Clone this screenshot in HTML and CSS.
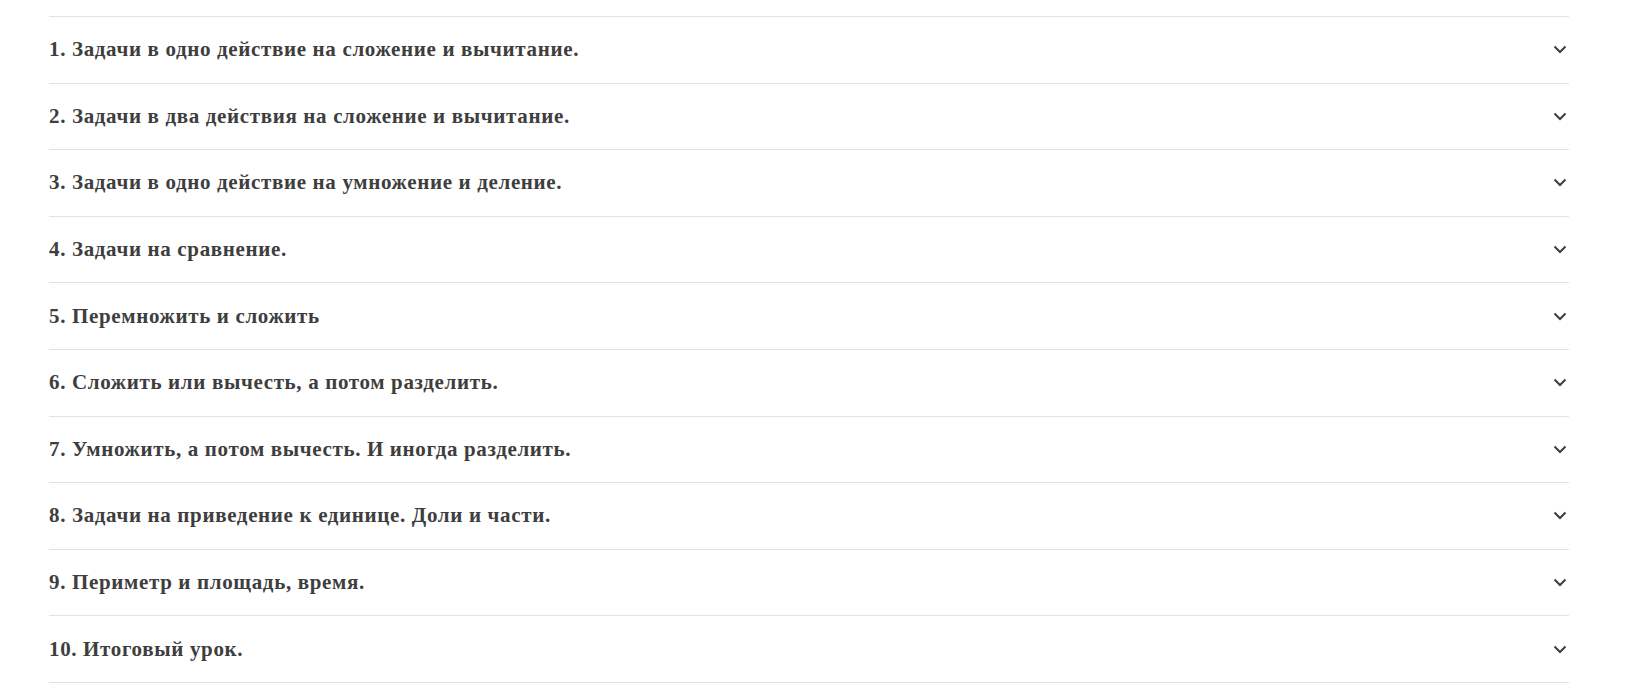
FILE: index.html
```html
<!DOCTYPE html>
<html lang="ru">
<head>
    <meta charset="utf-8">
    <title>Задачи</title>
    <link rel="stylesheet" href="styles.css">
</head>
<body>
    <div class="accordion">
        <div class="acc-item"><div class="acc-head"><span class="acc-title">1. Задачи в одно действие на сложение и вычитание.</span><svg class="chev" width="14" height="9" viewBox="0 0 14 9"><polyline points="1.5,1.5 7,7 12.5,1.5"/></svg></div></div>
        <div class="acc-item"><div class="acc-head"><span class="acc-title">2. Задачи в два действия на сложение и вычитание.</span><svg class="chev" width="14" height="9" viewBox="0 0 14 9"><polyline points="1.5,1.5 7,7 12.5,1.5"/></svg></div></div>
        <div class="acc-item"><div class="acc-head"><span class="acc-title">3. Задачи в одно действие на умножение и деление.</span><svg class="chev" width="14" height="9" viewBox="0 0 14 9"><polyline points="1.5,1.5 7,7 12.5,1.5"/></svg></div></div>
        <div class="acc-item"><div class="acc-head"><span class="acc-title">4. Задачи на сравнение.</span><svg class="chev" width="14" height="9" viewBox="0 0 14 9"><polyline points="1.5,1.5 7,7 12.5,1.5"/></svg></div></div>
        <div class="acc-item"><div class="acc-head"><span class="acc-title">5. Перемножить и сложить</span><svg class="chev" width="14" height="9" viewBox="0 0 14 9"><polyline points="1.5,1.5 7,7 12.5,1.5"/></svg></div></div>
        <div class="acc-item"><div class="acc-head"><span class="acc-title">6. Сложить или вычесть, а потом разделить.</span><svg class="chev" width="14" height="9" viewBox="0 0 14 9"><polyline points="1.5,1.5 7,7 12.5,1.5"/></svg></div></div>
        <div class="acc-item"><div class="acc-head"><span class="acc-title">7. Умножить, а потом вычесть. И иногда разделить.</span><svg class="chev" width="14" height="9" viewBox="0 0 14 9"><polyline points="1.5,1.5 7,7 12.5,1.5"/></svg></div></div>
        <div class="acc-item"><div class="acc-head"><span class="acc-title">8. Задачи на приведение к единице. Доли и части.</span><svg class="chev" width="14" height="9" viewBox="0 0 14 9"><polyline points="1.5,1.5 7,7 12.5,1.5"/></svg></div></div>
        <div class="acc-item"><div class="acc-head"><span class="acc-title">9. Периметр и площадь, время.</span><svg class="chev" width="14" height="9" viewBox="0 0 14 9"><polyline points="1.5,1.5 7,7 12.5,1.5"/></svg></div></div>
        <div class="acc-item"><div class="acc-head"><span class="acc-title">10. Итоговый урок.</span><svg class="chev" width="14" height="9" viewBox="0 0 14 9"><polyline points="1.5,1.5 7,7 12.5,1.5"/></svg></div></div>
    </div>
</body>
</html>
```

FILE: styles.css
```css
body {
    margin: 0;
    background: #fff;
    font-family: 'Liberation Serif', 'Times New Roman', serif;
    color: #3e3e3e;
}

.accordion {
    margin: 16px 0 0 49px;
    width: 1520px;
    border-top: 1px solid #e2e2e2;
}

.acc-item {
    border-bottom: 1px solid #e2e2e2;
}

.acc-head {
    display: flex;
    align-items: center;
    justify-content: space-between;
    height: 65.6px;
}

.acc-title {
    font-size: 21px;
    font-weight: bold;
    letter-spacing: 0.65px;
}

.chev {
    margin-right: 2px;
    fill: none;
    stroke: #3e3e3e;
    stroke-width: 2;
}
```
